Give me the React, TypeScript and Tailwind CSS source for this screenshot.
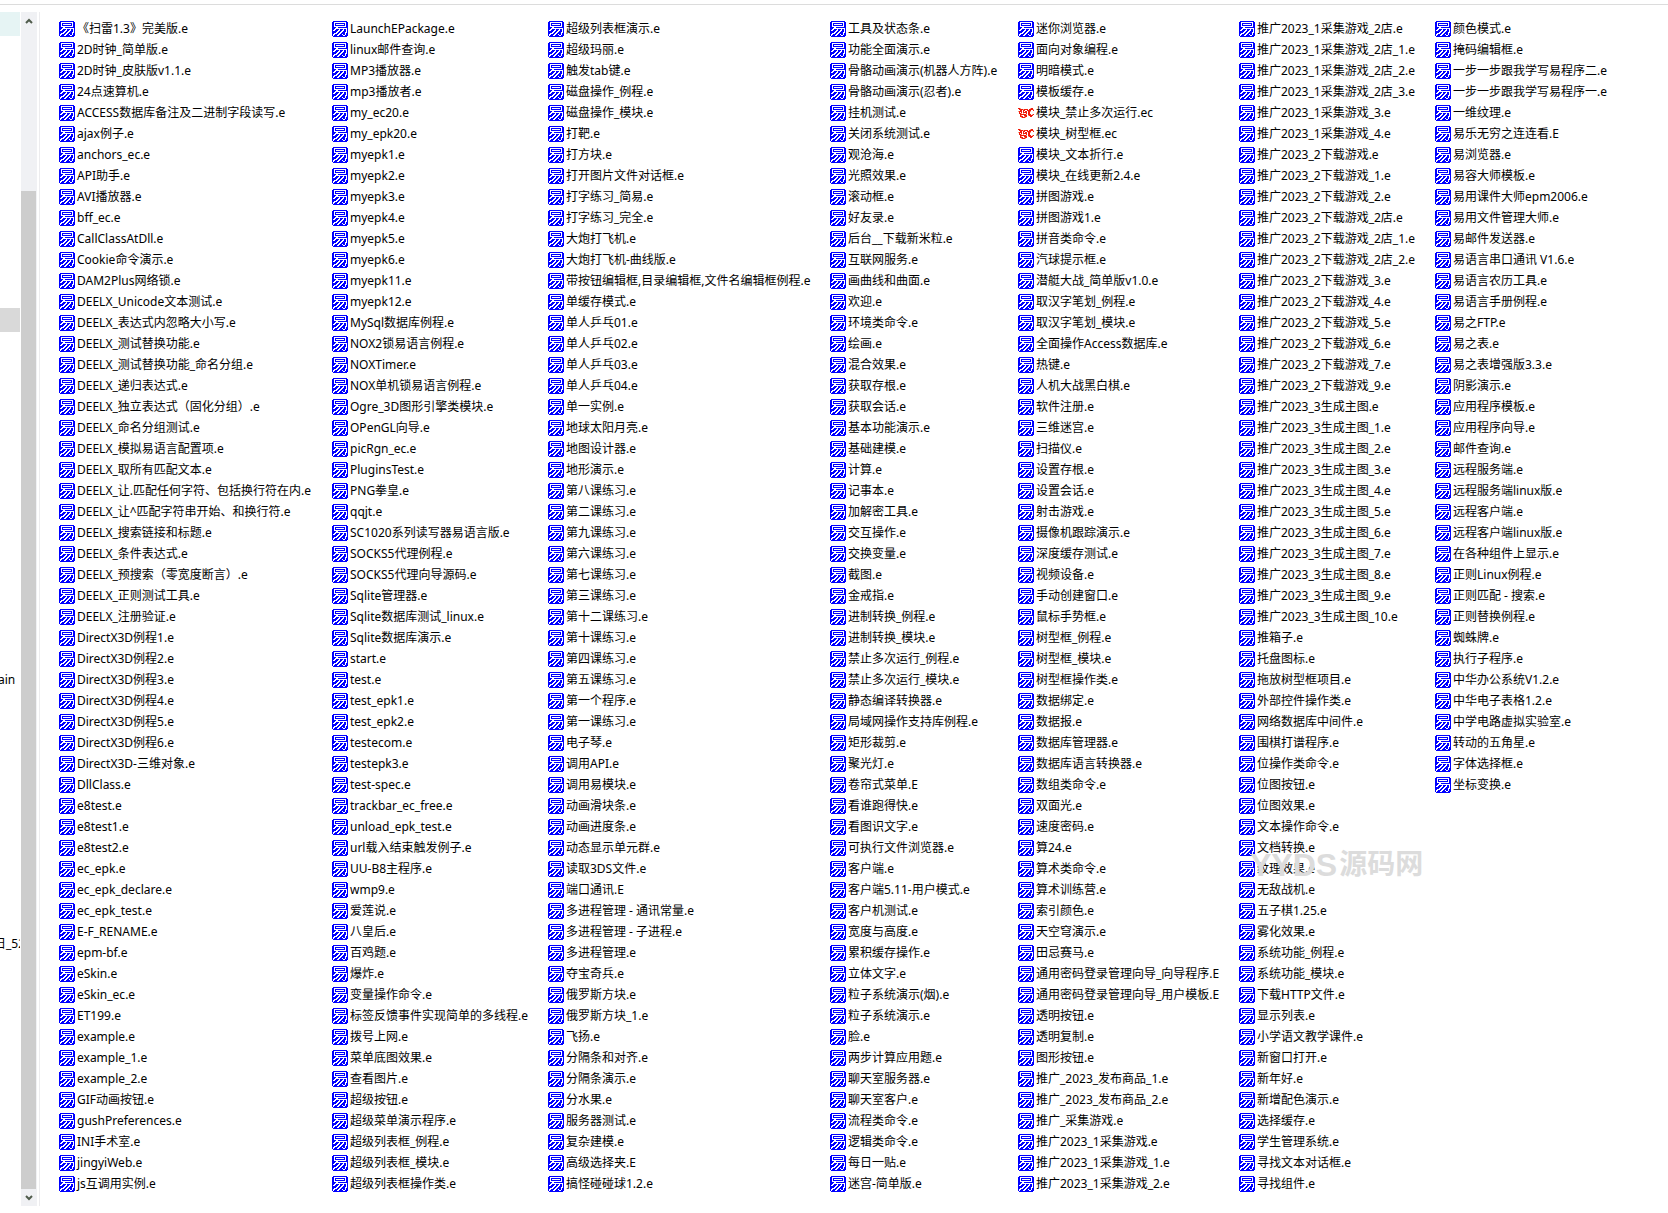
const columns: string[][] = [
  `《扫雷1.3》完美版.e
2D时钟_简单版.e
2D时钟_皮肤版v1.1.e
24点速算机.e
ACCESS数据库备注及二进制字段读写.e
ajax例子.e
anchors_ec.e
API助手.e
AVI播放器.e
bff_ec.e
CallClassAtDll.e
Cookie命令演示.e
DAM2Plus网络锁.e
DEELX_Unicode文本测试.e
DEELX_表达式内忽略大小写.e
DEELX_测试替换功能.e
DEELX_测试替换功能_命名分组.e
DEELX_递归表达式.e
DEELX_独立表达式（固化分组）.e
DEELX_命名分组测试.e
DEELX_模拟易语言配置项.e
DEELX_取所有匹配文本.e
DEELX_让.匹配任何字符、包括换行符在内.e
DEELX_让^匹配字符串开始、和换行符.e
DEELX_搜索链接和标题.e
DEELX_条件表达式.e
DEELX_预搜索（零宽度断言）.e
DEELX_正则测试工具.e
DEELX_注册验证.e
DirectX3D例程1.e
DirectX3D例程2.e
DirectX3D例程3.e
DirectX3D例程4.e
DirectX3D例程5.e
DirectX3D例程6.e
DirectX3D-三维对象.e
DllClass.e
e8test.e
e8test1.e
e8test2.e
ec_epk.e
ec_epk_declare.e
ec_epk_test.e
E-F_RENAME.e
epm-bf.e
eSkin.e
eSkin_ec.e
ET199.e
example.e
example_1.e
example_2.e
GIF动画按钮.e
gushPreferences.e
INI手术室.e
jingyiWeb.e
js互调用实例.e`,
  `LaunchEPackage.e
linux邮件查询.e
MP3播放器.e
mp3播放者.e
my_ec20.e
my_epk20.e
myepk1.e
myepk2.e
myepk3.e
myepk4.e
myepk5.e
myepk6.e
myepk11.e
myepk12.e
MySql数据库例程.e
NOX2锁易语言例程.e
NOXTimer.e
NOX单机锁易语言例程.e
Ogre_3D图形引擎类模块.e
OPenGL向导.e
picRgn_ec.e
PluginsTest.e
PNG拳皇.e
qqjt.e
SC1020系列读写器易语言版.e
SOCKS5代理例程.e
SOCKS5代理向导源码.e
Sqlite管理器.e
Sqlite数据库测试_linux.e
Sqlite数据库演示.e
start.e
test.e
test_epk1.e
test_epk2.e
testecom.e
testepk3.e
test-spec.e
trackbar_ec_free.e
unload_epk_test.e
url载入结束触发例子.e
UU-B8主程序.e
wmp9.e
爱莲说.e
八皇后.e
百鸡题.e
爆炸.e
变量操作命令.e
标签反馈事件实现简单的多线程.e
拨号上网.e
菜单底图效果.e
查看图片.e
超级按钮.e
超级菜单演示程序.e
超级列表框_例程.e
超级列表框_模块.e
超级列表框操作类.e`,
  `超级列表框演示.e
超级玛丽.e
触发tab键.e
磁盘操作_例程.e
磁盘操作_模块.e
打靶.e
打方块.e
打开图片文件对话框.e
打字练习_简易.e
打字练习_完全.e
大炮打飞机.e
大炮打飞机-曲线版.e
带按钮编辑框,目录编辑框,文件名编辑框例程.e
单缓存模式.e
单人乒乓01.e
单人乒乓02.e
单人乒乓03.e
单人乒乓04.e
单一实例.e
地球太阳月亮.e
地图设计器.e
地形演示.e
第八课练习.e
第二课练习.e
第九课练习.e
第六课练习.e
第七课练习.e
第三课练习.e
第十二课练习.e
第十课练习.e
第四课练习.e
第五课练习.e
第一个程序.e
第一课练习.e
电子琴.e
调用API.e
调用易模块.e
动画滑块条.e
动画进度条.e
动态显示单元群.e
读取3DS文件.e
端口通讯.E
多进程管理 - 通讯常量.e
多进程管理 - 子进程.e
多进程管理.e
夺宝奇兵.e
俄罗斯方块.e
俄罗斯方块_1.e
飞扬.e
分隔条和对齐.e
分隔条演示.e
分水果.e
服务器测试.e
复杂建模.e
高级选择夹.E
搞怪碰碰球1.2.e`,
  `工具及状态条.e
功能全面演示.e
骨骼动画演示(机器人方阵).e
骨骼动画演示(忍者).e
挂机测试.e
关闭系统测试.e
观沧海.e
光照效果.e
滚动框.e
好友录.e
后台__下载新米粒.e
互联网服务.e
画曲线和曲面.e
欢迎.e
环境类命令.e
绘画.e
混合效果.e
获取存根.e
获取会话.e
基本功能演示.e
基础建模.e
计算.e
记事本.e
加解密工具.e
交互操作.e
交换变量.e
截图.e
金戒指.e
进制转换_例程.e
进制转换_模块.e
禁止多次运行_例程.e
禁止多次运行_模块.e
静态编译转换器.e
局域网操作支持库例程.e
矩形裁剪.e
聚光灯.e
卷帘式菜单.E
看谁跑得快.e
看图识文字.e
可执行文件浏览器.e
客户端.e
客户端5.11-用户模式.e
客户机测试.e
宽度与高度.e
累积缓存操作.e
立体文字.e
粒子系统演示(烟).e
粒子系统演示.e
脸.e
两步计算应用题.e
聊天室服务器.e
聊天室客户.e
流程类命令.e
逻辑类命令.e
每日一贴.e
迷宫-简单版.e`,
  `迷你浏览器.e
面向对象编程.e
明暗模式.e
模板缓存.e
模块_禁止多次运行.ec
模块_树型框.ec
模块_文本折行.e
模块_在线更新2.4.e
拼图游戏.e
拼图游戏1.e
拼音类命令.e
汽球提示框.e
潜艇大战_简单版v1.0.e
取汉字笔划_例程.e
取汉字笔划_模块.e
全面操作Access数据库.e
热键.e
人机大战黑白棋.e
软件注册.e
三维迷宫.e
扫描仪.e
设置存根.e
设置会话.e
射击游戏.e
摄像机跟踪演示.e
深度缓存测试.e
视频设备.e
手动创建窗口.e
鼠标手势框.e
树型框_例程.e
树型框_模块.e
树型框操作类.e
数据绑定.e
数据报.e
数据库管理器.e
数据库语言转换器.e
数组类命令.e
双面光.e
速度密码.e
算24.e
算术类命令.e
算术训练营.e
索引颜色.e
天空穹演示.e
田忌赛马.e
通用密码登录管理向导_向导程序.E
通用密码登录管理向导_用户模板.E
透明按钮.e
透明复制.e
图形按钮.e
推广_2023_发布商品_1.e
推广_2023_发布商品_2.e
推广_采集游戏.e
推广2023_1采集游戏.e
推广2023_1采集游戏_1.e
推广2023_1采集游戏_2.e`,
  `推广2023_1采集游戏_2店.e
推广2023_1采集游戏_2店_1.e
推广2023_1采集游戏_2店_2.e
推广2023_1采集游戏_2店_3.e
推广2023_1采集游戏_3.e
推广2023_1采集游戏_4.e
推广2023_2下载游戏.e
推广2023_2下载游戏_1.e
推广2023_2下载游戏_2.e
推广2023_2下载游戏_2店.e
推广2023_2下载游戏_2店_1.e
推广2023_2下载游戏_2店_2.e
推广2023_2下载游戏_3.e
推广2023_2下载游戏_4.e
推广2023_2下载游戏_5.e
推广2023_2下载游戏_6.e
推广2023_2下载游戏_7.e
推广2023_2下载游戏_9.e
推广2023_3生成主图.e
推广2023_3生成主图_1.e
推广2023_3生成主图_2.e
推广2023_3生成主图_3.e
推广2023_3生成主图_4.e
推广2023_3生成主图_5.e
推广2023_3生成主图_6.e
推广2023_3生成主图_7.e
推广2023_3生成主图_8.e
推广2023_3生成主图_9.e
推广2023_3生成主图_10.e
推箱子.e
托盘图标.e
拖放树型框项目.e
外部控件操作类.e
网络数据库中间件.e
围棋打谱程序.e
位操作类命令.e
位图按钮.e
位图效果.e
文本操作命令.e
文档转换.e
纹理效果.e
无敌战机.e
五子棋1.25.e
雾化效果.e
系统功能_例程.e
系统功能_模块.e
下载HTTP文件.e
显示列表.e
小学语文教学课件.e
新窗口打开.e
新年好.e
新增配色演示.e
选择缓存.e
学生管理系统.e
寻找文本对话框.e
寻找组件.e`,
  `颜色模式.e
掩码编辑框.e
一步一步跟我学写易程序二.e
一步一步跟我学写易程序一.e
一维纹理.e
易乐无穷之连连看.E
易浏览器.e
易容大师模板.e
易用课件大师epm2006.e
易用文件管理大师.e
易邮件发送器.e
易语言串口通讯 V1.6.e
易语言农历工具.e
易语言手册例程.e
易之FTP.e
易之表.e
易之表增强版3.3.e
阴影演示.e
应用程序模板.e
应用程序向导.e
邮件查询.e
远程服务端.e
远程服务端linux版.e
远程客户端.e
远程客户端linux版.e
在各种组件上显示.e
正则Linux例程.e
正则匹配 - 搜索.e
正则替换例程.e
蜘蛛牌.e
执行子程序.e
中华办公系统V1.2.e
中华电子表格1.2.e
中学电路虚拟实验室.e
转动的五角星.e
字体选择框.e
坐标变换.e`,
].map((names) => names.split("\n"));

// One character per pixel: "#" main colour, "+" light accent.
const sourceBitmap = [
  ".##############.",
  "##............##",
  "##.##########.##",
  "##.#........#.##",
  "##.##########.##",
  "##............##",
  "####..##########",
  "###............#",
  "##..###.###.##.#",
  "#..###..##..##.#",
  "#####..##..###.#",
  "####..##..###..#",
  "##...##..####.##",
  "#..###..##.##.##",
  "#.###..####..###",
  ".##############.",
];

const moduleBitmap = [
  "##+.........+##.",
  ".####+####.####+",
  "..##.##..####..#",
  "+###.#.##.##+...",
  ".#.#.####.##....",
  ".##+.+..#.##....",
  "..######+.###.+#",
  "..#+..###.+####.",
  "..###.+##...##..",
  "...+###+........",
];

function toPath(bitmap: string[], mark: string) {
  return bitmap
    .flatMap((row, y) =>
      [...row].map((c, x) => (c === mark ? `M${x} ${y}h1v1h-1z` : ""))
    )
    .join("");
}

const sourcePath = toPath(sourceBitmap, "#");
const modulePath = toPath(moduleBitmap, "#");
const moduleAccentPath = toPath(moduleBitmap, "+");

function FileIcon({ name }: { name: string }) {
  if (name.endsWith(".ec")) {
    return (
      <svg viewBox="0 -3 16 16" shapeRendering="crispEdges" className="size-4 shrink-0" aria-hidden="true">
        <path d={modulePath} fill="#f01a0a" />
        <path d={moduleAccentPath} fill="#f7a184" />
      </svg>
    );
  }
  return (
    <svg viewBox="0 0 16 16" shapeRendering="crispEdges" className="size-4 shrink-0" aria-hidden="true">
      <path d={sourcePath} fill="#0000ff" />
    </svg>
  );
}

function FileColumn({ names }: { names: string[] }) {
  return (
    <ul>
      {names.map((name) => (
        <li key={name} className="flex h-[21px] items-center gap-0.5 whitespace-pre leading-4">
          <FileIcon name={name} />
          {name}
        </li>
      ))}
    </ul>
  );
}

function ScrollButton({ label, points }: { label: string; points: string }) {
  return (
    <button type="button" aria-label={label} className="flex h-[17px] w-4 shrink-0 items-center justify-center">
      <svg viewBox="0 0 8 6" className="h-1.5 w-2" aria-hidden="true">
        <polyline points={points} fill="none" stroke="#505c4c" strokeWidth="2" />
      </svg>
    </button>
  );
}

function TreePane() {
  return (
    <aside className="w-[21px] shrink-0 overflow-hidden whitespace-nowrap">
      <div className="h-6 w-5 bg-[#e6f4f4]" />
      <div className="mt-[272px] h-6 w-5 bg-[#d9d9d9]" />
      <div className="-ml-0.5 mt-[336px] h-6 leading-6">ain</div>
      <div className="-ml-1.5 mt-[240px] h-6 w-[26px] overflow-hidden leading-6">日_52</div>
    </aside>
  );
}

export default function App() {
  return (
    <div className="flex min-h-screen flex-col bg-white font-['Noto_Sans','Noto_Sans_CJK_SC',sans-serif] text-[12px] text-black">
      <header className="h-[5px] border-b border-[#dcdcdc]" />
      <div className="my-[7px] flex flex-1">
        <TreePane />
        <div className="flex w-4 shrink-0 flex-col bg-[#f0f1f4]">
          <ScrollButton label="Scroll up" points="1,5 4,2 7,5" />
          <div className="mt-[162px] w-[15px] flex-1 bg-[#cdcdcd]" />
          <ScrollButton label="Scroll down" points="1,1 4,4 7,1" />
        </div>
        <main className="relative ml-0.5 grid flex-1 grid-cols-[273px_216px_282px_188px_221px_196px_1fr] border-l border-[#ececee] pl-[19px] pt-1.5">
          {columns.map((names) => (
            <FileColumn key={names[0]} names={names} />
          ))}
          <div className="pointer-events-none absolute left-[1210px] top-[833px] flex items-center gap-0.5 font-['Liberation_Sans','Noto_Sans_CJK_SC',sans-serif] text-[28px] font-bold leading-10 text-[#dcdcdc]">
            <span className="text-[32px]">YYDS</span>
            <span>源码网</span>
          </div>
        </main>
      </div>
    </div>
  );
}
